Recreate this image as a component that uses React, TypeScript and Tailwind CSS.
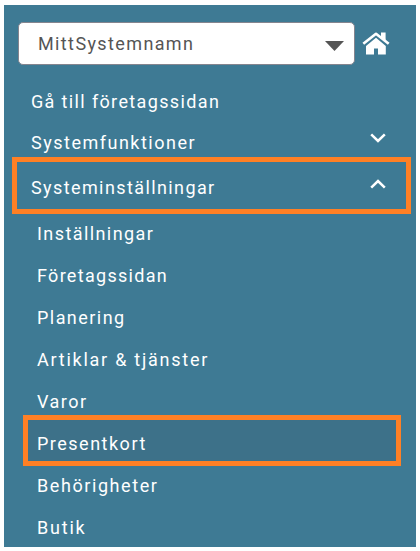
type Item = { label: string; spacing: string; active?: boolean };

const SUB_ITEMS: Item[] = [
  { label: "Inställningar", spacing: "tracking-[1.42px]" },
  { label: "Företagssidan", spacing: "tracking-[1.3px]" },
  { label: "Planering", spacing: "tracking-[1.45px]" },
  { label: "Artiklar & tjänster", spacing: "tracking-[1.75px]" },
  { label: "Varor", spacing: "tracking-[1.5px]" },
  { label: "Presentkort", spacing: "tracking-[1.5px]", active: true },
  { label: "Behörigheter", spacing: "tracking-[1.58px]" },
  { label: "Butik", spacing: "tracking-[1.8px]" },
];

function Chevron({ up = false }: { up?: boolean }) {
  return (
    <svg
      width="16"
      height="10"
      viewBox="0 0 16 10"
      fill="none"
      className={up ? "-mt-[7px] rotate-180" : "-mt-[8px]"}
    >
      <path d="M1.2 1.3 8 8l6.8-6.7" stroke="white" strokeWidth="2.5" />
    </svg>
  );
}

function House() {
  return (
    <svg width="28" height="23" viewBox="0 0 28 23" fill="white" className="ml-[7px]">
      <path d="M4 13.9 14 5.8l9.8 8.1V22.5H16V16.5H12v6H4z" />
      <path d="M19 0.5h4.6v9L19 5.7z" />
      <path d="M1.3 11.8 14 1.8l12.7 10" fill="none" stroke="white" strokeWidth="2.7" strokeLinejoin="round" />
    </svg>
  );
}

export default function App() {
  return (
    <div className="h-[551px] w-[420px] overflow-hidden bg-white px-1 pt-[5px] font-['Roboto',sans-serif] text-[18px] text-white">
      <nav className="h-[542px] bg-[#3e7a94] pt-[17px]">
        <div className="flex items-center pl-[14px]">
          <button
            type="button"
            className="flex h-[43px] w-[337px] items-center justify-between rounded-[5px] border border-[#85858f] bg-white pl-[19px] pr-[10px] text-[#555]"
          >
            <span className="tracking-[1.38px]">MittSystemnamn</span>
            <svg width="19" height="10" viewBox="0 0 19 10" className="mt-[4px]">
              <path d="M0 0h19L9.5 10z" fill="#555" />
            </svg>
          </button>
          <House />
        </div>

        <div className="mt-[16px] flex h-[40px] items-center pl-[27px]">
          <span className="tracking-[1.36px]">Gå till företagssidan</span>
        </div>
        <div className="flex h-[36px] items-center justify-between pl-[27px] pr-[30px] pt-[6px]">
          <span className="tracking-[1.5px]">Systemfunktioner</span>
          <Chevron />
        </div>
        <div className="ml-[8px] flex h-[57px] w-[399px] items-center justify-between border-[5px] border-[#ff8025] pl-[14px] pr-[20px] pt-[3px]">
          <span className="tracking-[1.4px]">Systeminställningar</span>
          <Chevron up />
        </div>

        <ul className="-mt-[2px]">
          {SUB_ITEMS.map(({ label, spacing, active }) => (
            <li
              key={label}
              className={
                active
                  ? "-mb-[2px] -mt-[7px] ml-[19px] flex h-[51px] w-[378px] items-center border-[5px] border-[#ff8025] bg-[#3d7189] pl-[9px] pt-[6px]"
                  : "flex h-[42px] items-center pl-[33px]"
              }
            >
              <span className={spacing}>{label}</span>
            </li>
          ))}
        </ul>
      </nav>
    </div>
  );
}
